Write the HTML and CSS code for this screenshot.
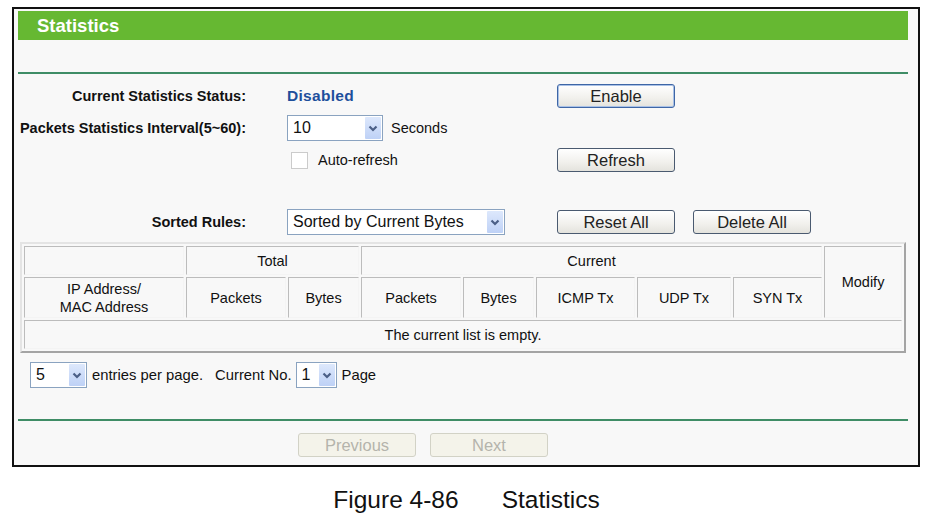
FILE: index.html
```html
<!DOCTYPE html>
<html>
<head>
<meta charset="utf-8">
<title>Statistics</title>
<link rel="stylesheet" href="styles.css">
</head>
<body>
<div class="frame">
  <div class="titlebar">Statistics</div>
  <div class="rule"></div>

  <div class="form">
    <div class="row">
      <div class="label">Current Statistics Status:</div>
      <div class="value"><span class="status">Disabled</span></div>
      <button class="btn btn-default">Enable</button>
    </div>
    <div class="row">
      <div class="label">Packets Statistics Interval(5~60):</div>
      <div class="value">
        <span class="select sel-interval"><span class="sel-text">10</span><span class="sel-arrow"><svg width="10" height="7" viewBox="0 0 10 7"><path d="M1.5 1.5 L5 5 L8.5 1.5" fill="none" stroke="#4b5f86" stroke-width="2.2"/></svg></span></span>
        <span class="unit">Seconds</span>
      </div>
    </div>
    <div class="row">
      <div class="label"></div>
      <div class="value">
        <span class="checkbox"></span>
        <span class="check-label">Auto-refresh</span>
      </div>
      <button class="btn">Refresh</button>
    </div>
    <div class="row row-sorted">
      <div class="label">Sorted Rules:</div>
      <div class="value">
        <span class="select sel-sort"><span class="sel-text">Sorted by Current Bytes</span><span class="sel-arrow"><svg width="10" height="7" viewBox="0 0 10 7"><path d="M1.5 1.5 L5 5 L8.5 1.5" fill="none" stroke="#4b5f86" stroke-width="2.2"/></svg></span></span>
      </div>
      <button class="btn">Reset All</button>
      <button class="btn btn-gap">Delete All</button>
    </div>
  </div>

  <table class="stats">
    <colgroup>
      <col class="c-ip"><col class="c-tp"><col class="c-tb"><col class="c-cp"><col class="c-cb"><col class="c-icmp"><col class="c-udp"><col class="c-syn"><col class="c-mod">
    </colgroup>
    <tr class="r1">
      <td></td>
      <td colspan="2">Total</td>
      <td colspan="5">Current</td>
      <td rowspan="2">Modify</td>
    </tr>
    <tr class="r2">
      <td>IP Address/<br>MAC Address</td>
      <td>Packets</td>
      <td>Bytes</td>
      <td>Packets</td>
      <td>Bytes</td>
      <td>ICMP Tx</td>
      <td>UDP Tx</td>
      <td>SYN Tx</td>
    </tr>
    <tr class="r3">
      <td colspan="9">The current list is empty.</td>
    </tr>
  </table>

  <div class="pager">
    <span class="select sel-small sel-entries"><span class="sel-text">5</span><span class="sel-arrow"><svg width="10" height="7" viewBox="0 0 10 7"><path d="M1.5 1.5 L5 5 L8.5 1.5" fill="none" stroke="#4b5f86" stroke-width="2.2"/></svg></span></span>
    <span class="pager-text">entries per page.</span>
    <span class="pager-text pager-current">Current No.</span>
    <span class="select sel-small sel-page"><span class="sel-text">1</span><span class="sel-arrow"><svg width="10" height="7" viewBox="0 0 10 7"><path d="M1.5 1.5 L5 5 L8.5 1.5" fill="none" stroke="#4b5f86" stroke-width="2.2"/></svg></span></span>
    <span class="pager-text pager-page">Page</span>
  </div>

  <div class="rule rule-bottom"></div>

  <div class="nav">
    <button class="btn btn-disabled" disabled>Previous</button>
    <button class="btn btn-disabled" disabled>Next</button>
  </div>
</div>

<div class="caption"><span>Figure 4-86</span><span class="caption-title">Statistics</span></div>
</body>
</html>
```

FILE: styles.css
```css
html, body {
  margin: 0;
  background: #ffffff;
}

body {
  font-family: "Liberation Sans", Arial, sans-serif;
  color: #111;
}

.frame {
  margin: 7px 0 0 12px;
  width: 890px;
  border: 2px solid #111;
  background: #f8f8f8;
  padding: 2px 10px 8px 4px;
}

.titlebar {
  height: 29px;
  background: #66b832;
  color: #ffffff;
  font-weight: bold;
  font-size: 18.5px;
  line-height: 29px;
  padding-left: 19px;
}

.rule {
  height: 2px;
  background: #3f8d66;
  margin-top: 32px;
}

.form {
  padding-top: 6px;
}

.row {
  display: flex;
  align-items: center;
  height: 32px;
}

.row-sorted {
  margin-top: 30px;
}

.label {
  width: 228px;
  text-align: right;
  font-weight: bold;
  font-size: 14.5px;
  color: #111;
}

.value {
  width: 270px;
  margin-left: 41px;
  display: flex;
  align-items: center;
  font-size: 14.5px;
}

.status {
  color: #1d4f9c;
  font-weight: bold;
  font-size: 15.5px;
  letter-spacing: 0.3px;
}

.btn {
  font-family: "Liberation Sans", Arial, sans-serif;
  width: 118px;
  height: 24px;
  padding: 0;
  font-size: 16.5px;
  color: #222;
  background: linear-gradient(#ffffff, #f1f0ec 60%, #e4e3dd);
  border: 1px solid #4a5a70;
  border-radius: 3px;
}

.btn-default {
  border: 1px solid #3e66a6;
  box-shadow: inset 0 0 0 1px #a9c1e6;
}

.btn-gap {
  margin-left: 18px;
}

.select {
  display: inline-flex;
  align-items: stretch;
  height: 26px;
  box-sizing: border-box;
  border: 1px solid #8aa3c0;
  background: #ffffff;
  font-size: 16px;
  color: #111;
}

.sel-text {
  flex: 1;
  padding-left: 5px;
  line-height: 24px;
  white-space: nowrap;
}

.sel-arrow {
  width: 16px;
  margin: 1px;
  display: flex;
  align-items: center;
  justify-content: center;
  background: linear-gradient(#dde8fc, #bed1f6);
  border-radius: 1px;
}

.sel-interval {
  width: 96px;
}

.sel-sort {
  width: 218px;
}

.unit {
  margin-left: 8px;
}

.checkbox {
  width: 17px;
  height: 17px;
  box-sizing: border-box;
  margin-left: 4px;
  border: 1px solid #cbcbcb;
  background: #ffffff;
}

.check-label {
  margin-left: 10px;
}

.stats {
  margin: 4px 0 0 2px;
  width: 886px;
  table-layout: fixed;
  border-collapse: separate;
  border-spacing: 2px;
  border: 2px solid;
  border-color: #e4e4e4 #a4a4a4 #a4a4a4 #e4e4e4;
  font-size: 14.5px;
  color: #111;
}

.stats td {
  padding: 0;
  text-align: center;
  vertical-align: middle;
  border: 1px solid;
  border-color: #bcbcbc #f4f4f4 #f4f4f4 #bcbcbc;
  line-height: 18px;
}

.c-ip { width: 160px; }
.c-tp { width: 100px; }
.c-tb { width: 71px; }
.c-cp { width: 100px; }
.c-cb { width: 71px; }
.c-icmp { width: 99px; }
.c-udp { width: 94px; }
.c-syn { width: 89px; }
.c-mod { width: 78px; }

.r1 { height: 29px; }
.r2 { height: 41px; }
.r3 { height: 29px; }

.pager {
  display: flex;
  align-items: center;
  height: 30px;
  margin-top: 7px;
  padding-left: 12px;
  font-size: 14.8px;
}

.sel-small {
  font-size: 16px;
}

.sel-entries {
  width: 57px;
}

.sel-page {
  width: 41px;
}

.pager-text {
  margin-left: 5px;
}

.pager-current {
  margin-left: 12px;
  margin-right: 4px;
}

.pager-page {
  margin-left: 5px;
}

.rule-bottom {
  margin-top: 29px;
}

.nav {
  display: flex;
  gap: 14px;
  margin-top: 12px;
  padding-left: 280px;
}

.btn-disabled {
  color: #b4b4ac;
  background: #f4f3ea;
  border: 1px solid #d2d2c6;
  border-radius: 3px;
}

.caption {
  margin-top: 18px;
  text-align: center;
  font-size: 24.5px;
  line-height: 30px;
  color: #111;
}

.caption-title {
  margin-left: 43px;
}
```
